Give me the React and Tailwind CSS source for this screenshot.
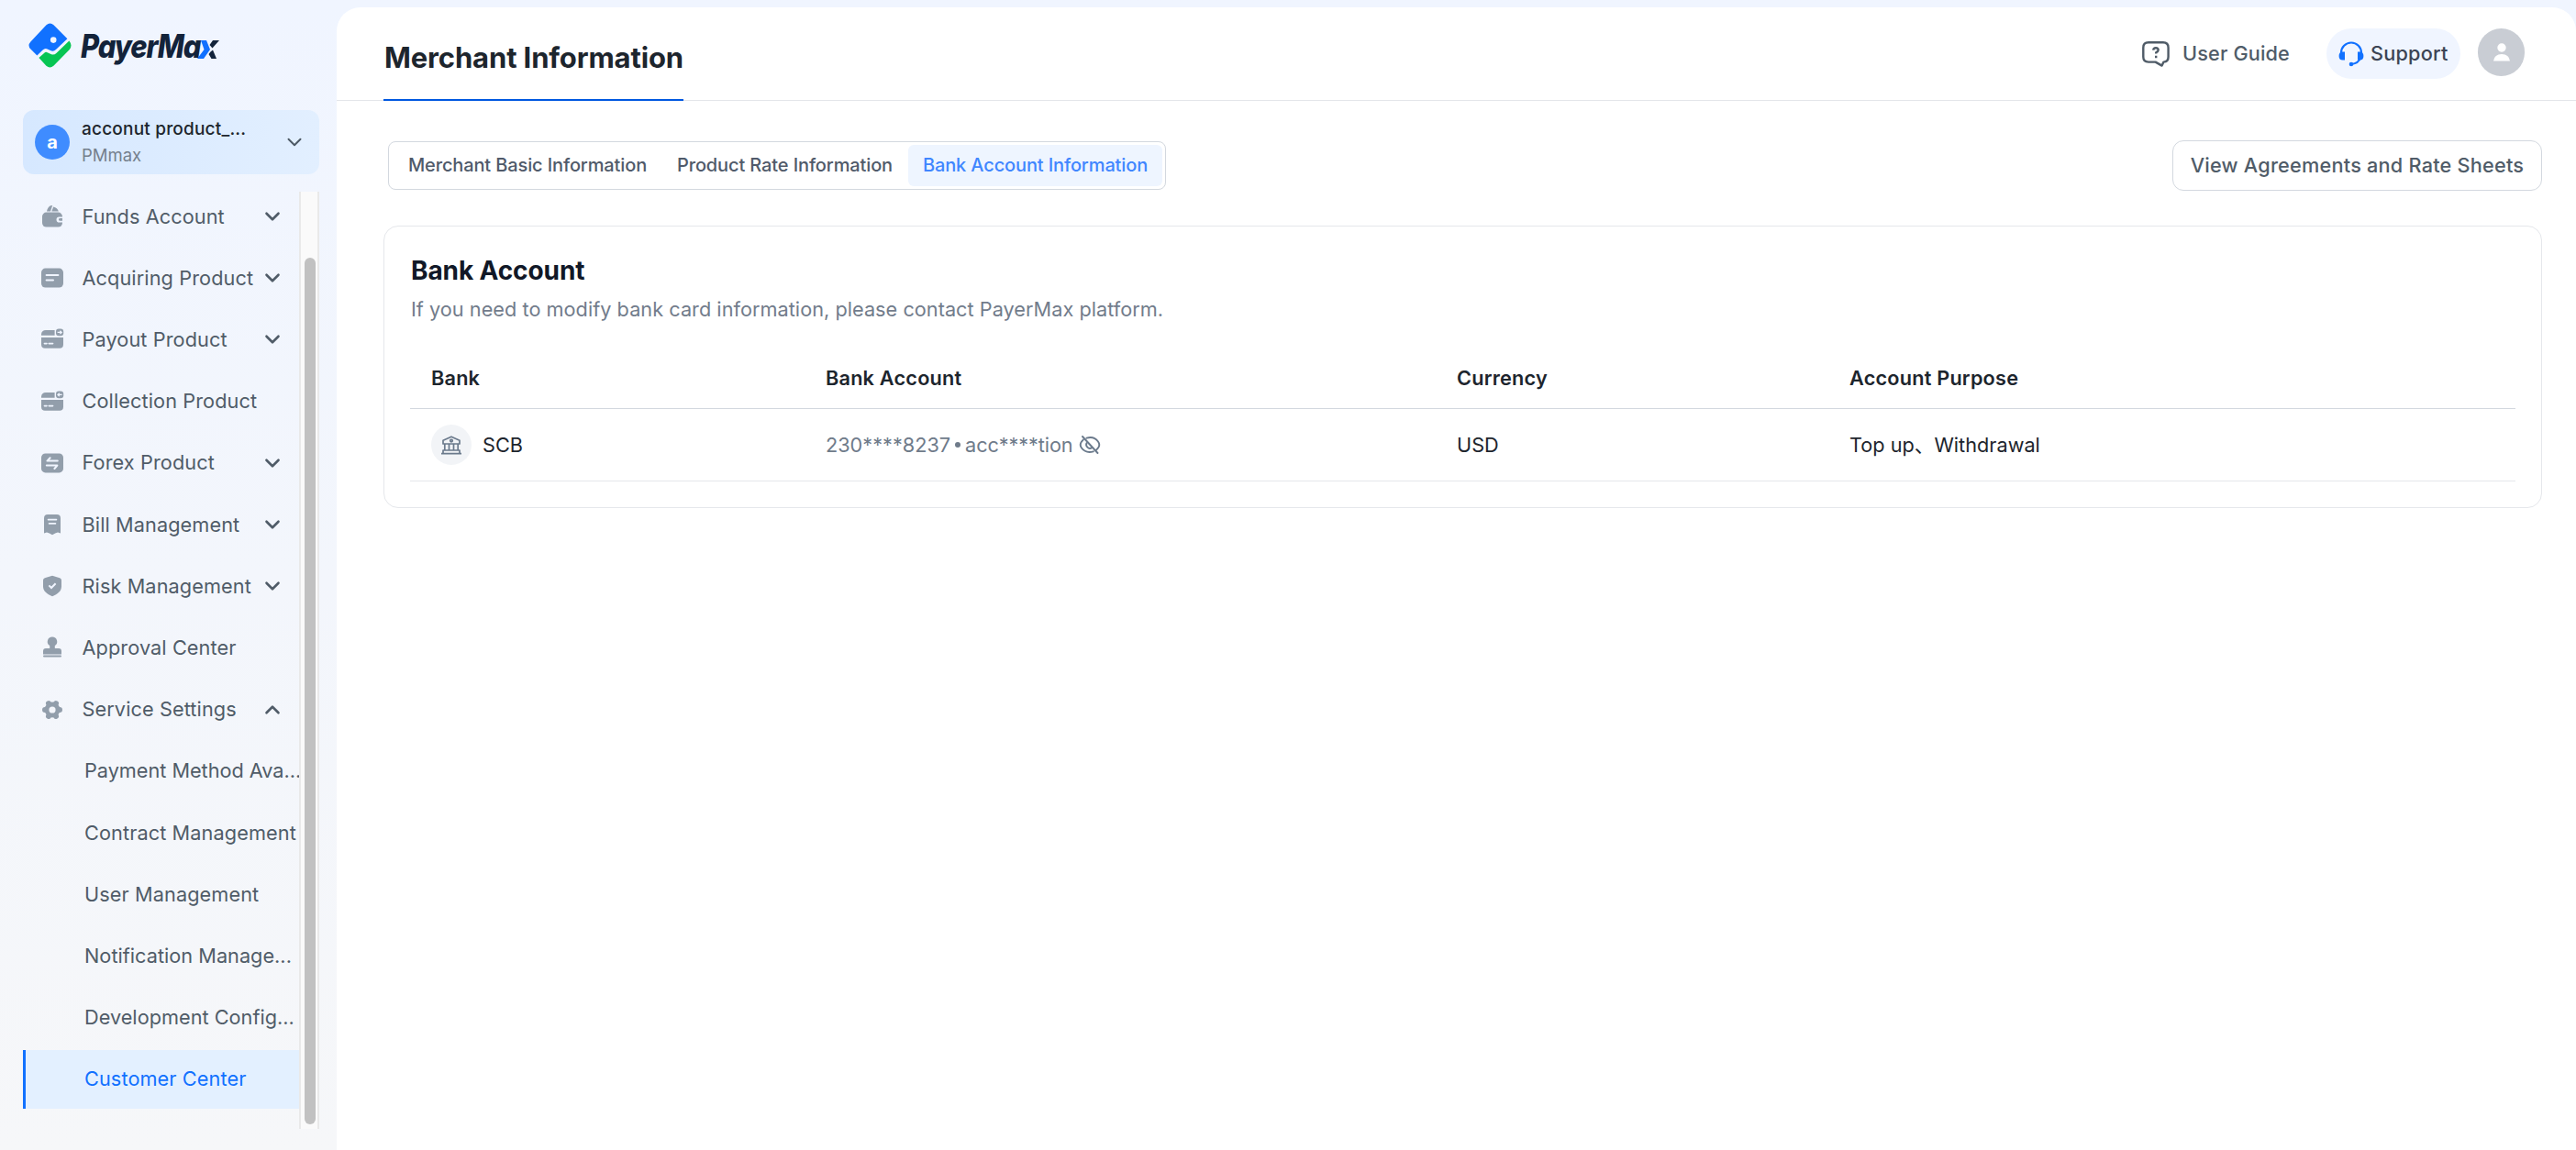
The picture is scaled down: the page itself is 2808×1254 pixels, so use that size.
import React, { useState } from 'react';
import { ChevronDown, ChevronUp } from 'lucide-react';

// --- Sidebar icons ---
const iconProps = { viewBox: '0 0 26 26', className: 'w-[26px] h-[26px] shrink-0', fill: '#929eab' };

const WalletIcon = () => (
  <svg {...iconProps}>
    <path d="M7 7.5C7.4 5 9 2 11 1.2L13.2 1 11 7.5Z" />
    <path d="M12.3 7.5 14.2 2.4C17 3.2 19.2 4.8 19.8 7.5Z" />
    <rect x="2" y="8.6" width="22" height="16" rx="4.5" />
    <path d="M25 13.4H20.6A3.1 3.1 0 0 0 20.6 19.6H25V17.8H21A1.4 1.4 0 0 1 21 15.1H25Z" fill="#f0f5ff" />
  </svg>
);

const AcquiringIcon = () => (
  <svg {...iconProps}>
    <rect x="1" y="2.6" width="24" height="21" rx="4.5" />
    <path d="M6.6 10H19.4M6.6 15.4H14" stroke="#f0f5ff" strokeWidth="2" strokeLinecap="round" />
  </svg>
);

const CardIcon = ({ back }) => (
  <svg {...iconProps}>
    <path d="M1 8.8V7.6A5 5 0 0 1 6 3H15.6V8.8Z" />
    <path d="M1 11H25V18.8A4 4 0 0 1 21 22.8H5A4 4 0 0 1 1 18.8Z" />
    <rect x="17" y="1.6" width="8.2" height="7.6" rx="3" />
    {back
      ? <path d="M23.6 5.4H19M20.8 3.7 19 5.4 20.8 7.1" stroke="#f0f5ff" strokeWidth="1.3" fill="none" />
      : <path d="M18.6 5.4H23.2M21.4 3.7 23.2 5.4 21.4 7.1" stroke="#f0f5ff" strokeWidth="1.3" fill="none" />}
    <path d="M4.4 17.6H7M9.2 17.6H13.6" stroke="#f0f5ff" strokeWidth="1.6" strokeLinecap="round" />
  </svg>
);

const ForexIcon = () => (
  <svg {...iconProps}>
    <rect x="1" y="2.4" width="24" height="21" rx="4.5" />
    <path d="M18.8 10.6H7.4L10.6 7.2M6.8 15.6H18.4L15.4 19" stroke="#f0f5ff" strokeWidth="2" fill="none" strokeLinecap="round" strokeLinejoin="round" />
  </svg>
);

const BillIcon = () => (
  <svg {...iconProps}>
    <path d="M4 6A4 4 0 0 1 8 2H18A4 4 0 0 1 22 6V22.4L19 21.4 16.2 22.4 13 24.2 9.800 22.4 7 21.4 4 22.4Z" />
    <path d="M8.6 7.6H17.4M9.6 11.8H16.4" stroke="#f0f5ff" strokeWidth="1.8" strokeLinecap="round" />
  </svg>
);

const ShieldIcon = () => (
  <svg {...iconProps}>
    <path d="M13 1.8 21.2 4.2Q23 4.8 23 6.6V13.4C23 18.4 19 21.6 13 24.2 7 21.6 3 18.4 3 13.4V6.6Q3 4.8 4.8 4.2Z" />
    <path d="M9.4 12.4 12 15 16.6 10.2" stroke="#f0f5ff" strokeWidth="2" fill="none" />
  </svg>
);

const StampIcon = () => (
  <svg {...iconProps}>
    <path d="M13 1.4A5.2 5.2 0 0 1 15.8 11V14H20A3 3 0 0 1 23 17V20.4H3V17A3 3 0 0 1 6 14H10.2V11A5.2 5.2 0 0 1 13 1.4Z" />
    <rect x="3" y="21.6" width="20" height="2" rx="1" />
  </svg>
);

const GearIcon = () => (
  <svg {...iconProps}>
    <circle cx="13" cy="13" r="8.4" />
    <path d="M5 13H21M9 6.1 17 19.9M17 6.1 9 19.9" stroke="#929eab" strokeWidth="6" strokeLinecap="round" />
    <circle cx="13" cy="13" r="3.6" fill="#f4f6fb" />
  </svg>
);

const menu = [
  { label: 'Funds Account', icon: <WalletIcon />, arrow: 'down' },
  { label: 'Acquiring Product', icon: <AcquiringIcon />, arrow: 'down' },
  { label: 'Payout Product', icon: <CardIcon />, arrow: 'down' },
  { label: 'Collection Product', icon: <CardIcon back /> },
  { label: 'Forex Product', icon: <ForexIcon />, arrow: 'down' },
  { label: 'Bill Management', icon: <BillIcon />, arrow: 'down' },
  { label: 'Risk Management', icon: <ShieldIcon />, arrow: 'down' },
  { label: 'Approval Center', icon: <StampIcon /> },
  { label: 'Service Settings', icon: <GearIcon />, arrow: 'up' },
];

const subMenu = [
  { label: 'Payment Method Ava...', track: 'tracking-[-0.02px]' },
  { label: 'Contract Management', track: 'tracking-[0.1px]' },
  { label: 'User Management', track: 'tracking-[0.1px]' },
  { label: 'Notification Manage...', track: 'tracking-[0.02px]' },
  { label: 'Development Config...', track: 'tracking-[0.02px]' },
  { label: 'Customer Center', track: 'tracking-[0.1px]' },
];

const Logo = () => (
  <div className="flex h-[50px] items-center">
    <svg viewBox="0 0 48 50" className="h-[50px] w-12 shrink-0">
      <path d="M19.5 2.2Q23.5-1.2 27.5 2.2L42.4 17.2 30 29Q27 32 24 30L20 28.2Q17.4 27.6 15.6 29.6L9.4 35.4 2.4 28.6Q-1.4 24.6 2.4 20.4Z" fill="#1171ff" />
      <path d="M44.4 19.4Q48.4 24.4 44.8 29L27.4 46.8Q23.4 50.2 19.4 46.8L11.4 38 17.6 32.4Q19 31.2 20.6 32.2L25 34.2Q28 35.2 30.4 33Z" fill="#07c553" />
      <circle cx="27.2" cy="18.6" r="3.3" fill="#f0f5ff" />
    </svg>
    <div className="ml-[9px] flex text-[35px] leading-[50px] font-extrabold italic tracking-[-1.2px] text-[#13233a]">
      <span className="w-[127px] origin-left scale-x-[0.88]">PayerMa</span>
      <svg viewBox="0 0 24 20" className="mt-[19px] h-5 w-6">
        <path d="M4 0H10L14 10 7 20H0L7.500 10Z" fill="#1171ff" />
        <path d="M17 0H24L16.500 8.500 13.500 5ZM14.500 12.500 17 10.500 21 20H15.500L12.500 15Z" fill="#13233a" />
      </svg>
    </div>
  </div>
);

const Sidebar = () => (
  <aside className="flex w-[367px] shrink-0 flex-col pt-[25px] pl-[25px]">
    <div className="pl-[6px]"><Logo /></div>
    <div className="mt-[45px] flex h-[70px] w-[323px] items-center rounded-xl bg-linear-to-r from-[#d6e8ff] to-[#e2efff] pl-[13px]">
      <div className="flex h-[38px] w-[38px] items-center justify-center rounded-full bg-[#3f8cff] text-[20px] font-bold text-white">a</div>
      <div className="ml-[13px] w-[218px]">
        <div className="text-[19px] leading-[29px] font-medium tracking-[0.2px] text-[#1d252d]">acconut product_...</div>
        <div className="text-[18.5px] leading-[29px] text-[#75808c]">PMmax</div>
      </div>
      <ChevronDown className="ml-px h-[26px] w-[26px] text-[#4d5965]" strokeWidth={1.8} />
    </div>
    <div className="mt-[19px] flex h-[1022px]">
      <nav className="-mt-[5px] flex w-[301px] flex-col gap-[3.2px]">
        {menu.map(item => (
          <div key={item.label} className="flex h-16 items-center pl-[19px] text-[21.7px] tracking-[0.1px] text-[#505c68]">
            {item.icon}
            <span className="ml-[19.5px] flex-1 whitespace-nowrap">{item.label}</span>
            {item.arrow === 'down' && <ChevronDown className="mr-[16px] h-[26px] w-[26px] shrink-0" strokeWidth={2.4} />}
            {item.arrow === 'up' && <ChevronUp className="mr-[16px] h-[26px] w-[26px] shrink-0" strokeWidth={2.4} />}
          </div>
        ))}
        {subMenu.map(item => (
          <div
            key={item.label}
            className={`flex h-16 items-center border-l-[3px] pl-[64px] text-[21.7px] whitespace-nowrap ${item.track} ${item.label === 'Customer Center' ? 'border-[#1171ff] bg-[#e3f0ff] text-[#1171ff]' : 'border-transparent text-[#505c68]'}`}
          >
            {item.label}
          </div>
        ))}
      </nav>
      {/* always visible scrollbar */}
      <div className="flex w-[22px] border-r-2 border-l-2 border-[#e9e9e9] bg-[#fafafa] pt-[72px] pl-[4px]">
        <div className="h-[945px] w-3 rounded-full bg-[#c1c1c1]" />
      </div>
    </div>
  </aside>
);

const Header = () => (
  <header className="flex h-[102px] justify-between border-b border-[#e3e6ea] pr-[56px] pl-[51px]">
    <h1 className="h-[102px] w-[327px] border-b-2 border-[#0058e0] pl-px text-[31px] leading-[109px] font-bold tracking-[-0.13px] whitespace-nowrap text-[#1d252d]">Merchant Information</h1>
    <div className="mt-[23px] flex items-start">
      <div className="flex h-[55px] items-center text-[21.7px] font-medium text-[#505c68]">
        <svg viewBox="0 0 30 28" className="h-7 w-[30px]" fill="none" stroke="#4f5b67" strokeWidth="2.4" strokeLinejoin="round">
          <path d="M7 1.300H23Q28.600 1.300 28.600 7V17Q28.600 22.400 23.500 22.600L21.600 26.600 14.600 22.600H7Q1.300 22.600 1.300 17V7Q1.300 1.300 7 1.300Z" />
          <path d="M12.200 9.600Q12.400 7.200 15 7.200T17.700 9.600Q17.700 11 15.200 12.300V13.600M15.200 15.800V18.200" />
        </svg>
        <span className="ml-[14px] w-[118px] tracking-[0.15px] whitespace-nowrap">User Guide</span>
      </div>
      <div className="ml-[39px] flex h-[55px] w-[146px] items-center rounded-full bg-[#f0f5ff] pl-[13px] text-[21.7px] font-medium text-[#3c4454]">
        <svg viewBox="0 0 28 28" className="h-7 w-7" fill="none" stroke="#1171ff" strokeWidth="2.200">
          <path d="M3 13V12.500A11 11 0 0 1 25 12.500V13M24 18Q22 24 14.500 25" />
          <path d="M7 11.500V20.500H4.600Q.6 20.500.6 16T4.600 11.500ZM21 11.500V20.500H23.400Q27.400 20.500 27.400 16T23.400 11.500Z" fill="#1171ff" stroke="none" />
          <circle cx="14" cy="25" r="2.300" fill="#1171ff" stroke="none" />
        </svg>
        <span className="ml-[7px] tracking-[0.2px]">Support</span>
      </div>
      <div className="ml-[19px] flex h-[52px] w-[51px] items-center justify-center rounded-full bg-[#c9cdd4]">
        <svg viewBox="0 0 18 20" className="h-5 w-[18px]" fill="#fff">
          <circle cx="9" cy="5" r="4.700" />
          <path d="M0 19.500Q1 12 9 12T18 19.500Z" />
        </svg>
      </div>
    </div>
  </header>
);

const tabs = [
  { label: 'Merchant Basic Information', size: 'w-[292px]' },
  { label: 'Product Rate Information', size: 'w-[269px]' },
  { label: 'Bank Account Information', size: 'w-[277px]' },
];

const BankIcon = () => (
  <svg viewBox="0 0 22 21" className="h-[21px] w-[22px]" fill="none" stroke="#6b7a8c" strokeWidth="1.700" strokeLinejoin="round">
    <path d="M2 9V5.200L11 1.200 20 5.200V9ZM3.800 9V16M8.500 9V16M13.500 9V16M18.200 9V16M2 19V16H20V19M0 19.600H22" />
    <circle cx="11" cy="5.600" r="1.300" />
  </svg>
);

const EyeOffIcon = () => (
  <svg viewBox="0 0 24 20" className="ml-[6px] h-5 w-6" fill="none" stroke="#6b7a8c" strokeWidth="1.900" strokeLinecap="round">
    <path d="M8.500 2.700Q16.500.4 21 6.500 23.600 10 21 13.500L19.300 15.400M15.800 17.300Q7.500 19.600 3 13.500 .4 10 3 6.500L4.700 4.600M4 1 20.500 19" />
    <path d="M8.600 8A4 4 0 0 0 14 13.400" />
  </svg>
);

export default function App() {
  const [activeTab, setActiveTab] = useState('Bank Account Information');

  return (
    <div className="flex h-[1254px] w-[2808px] overflow-hidden bg-linear-to-b from-[#f0f5ff] to-[#f6f7f9] font-['Inter','Noto_Sans_CJK_SC',sans-serif]">
      <Sidebar />
      <main className="mt-2 flex-1 rounded-t-[26px] bg-white">
        <Header />
        <div className="flex items-start justify-between pt-[43px] pr-[37px] pl-[56px]">
          <div className="mt-px flex h-[53px] w-[848px] items-center rounded-lg border border-[#d3d8df] pl-[5px]">
            {tabs.map(tab => (
              <button
                key={tab.label}
                onClick={() => setActiveTab(tab.label)}
                className={`h-[45px] shrink-0 rounded-md pb-px text-[20px] font-medium tracking-[-0.12px] whitespace-nowrap ${tab.size} ${activeTab === tab.label ? 'bg-[#eef5ff] text-[#4086ff]' : 'text-[#505a6a]'}`}
              >
                {tab.label}
              </button>
            ))}
          </div>
          <button className="h-[55px] w-[403px] rounded-xl border border-[#d3d8df] text-[21.7px] font-medium tracking-[0.22px] whitespace-nowrap text-[#505c68]">View Agreements and Rate Sheets</button>
        </div>

        <section className="mt-[38px] mr-[37px] ml-[51px] h-[308px] rounded-2xl border border-[#e5e7eb] pt-[28px] pr-[28px] pl-[28px]">
          <h2 className="pl-px text-[28px] leading-10 font-bold tracking-[-0.1px] text-[#111827]">Bank Account</h2>
          <p className="mt-[6px] pl-px text-[21.7px] leading-8 tracking-[0.03px] text-[#727c8b]">If you need to modify bank card information, please contact PayerMax platform.</p>
          <div className="mt-[26px] grid h-[67px] grid-cols-[430px_688px_428px_1fr] items-center border-b border-[#d3d8df] text-[21.7px] font-semibold tracking-[0.2px] text-[#1d252d]">
            <div className="pl-[23px]">Bank</div>
            <div className="pl-[23px]">Bank Account</div>
            <div className="pl-[23px]">Currency</div>
            <div className="pl-[23px]">Account Purpose</div>
          </div>
          <div className="grid h-[79px] grid-cols-[430px_688px_428px_1fr] items-center border-b border-[#e5e7eb] text-[21.7px] text-[#1d252d]">
            <div className="flex items-center pl-[23px]">
              <div className="flex h-11 w-11 items-center justify-center rounded-full bg-[#f2f4f7]"><BankIcon /></div>
              <span className="ml-[12px]">SCB</span>
            </div>
            <div className="flex items-center pl-[23px] text-[#6f7b8a]">
              <span>230****8237</span>
              <span className="mr-[5px] ml-[5px] h-[6px] w-[6px] rounded-full bg-[#6f7b8a]" />
              <span className="tracking-[-0.1px]">acc****tion</span>
              <EyeOffIcon />
            </div>
            <div className="pl-[23px]">USD</div>
            <div className="pl-[23px]">Top up、Withdrawal</div>
          </div>
        </section>
      </main>
    </div>
  );
}
